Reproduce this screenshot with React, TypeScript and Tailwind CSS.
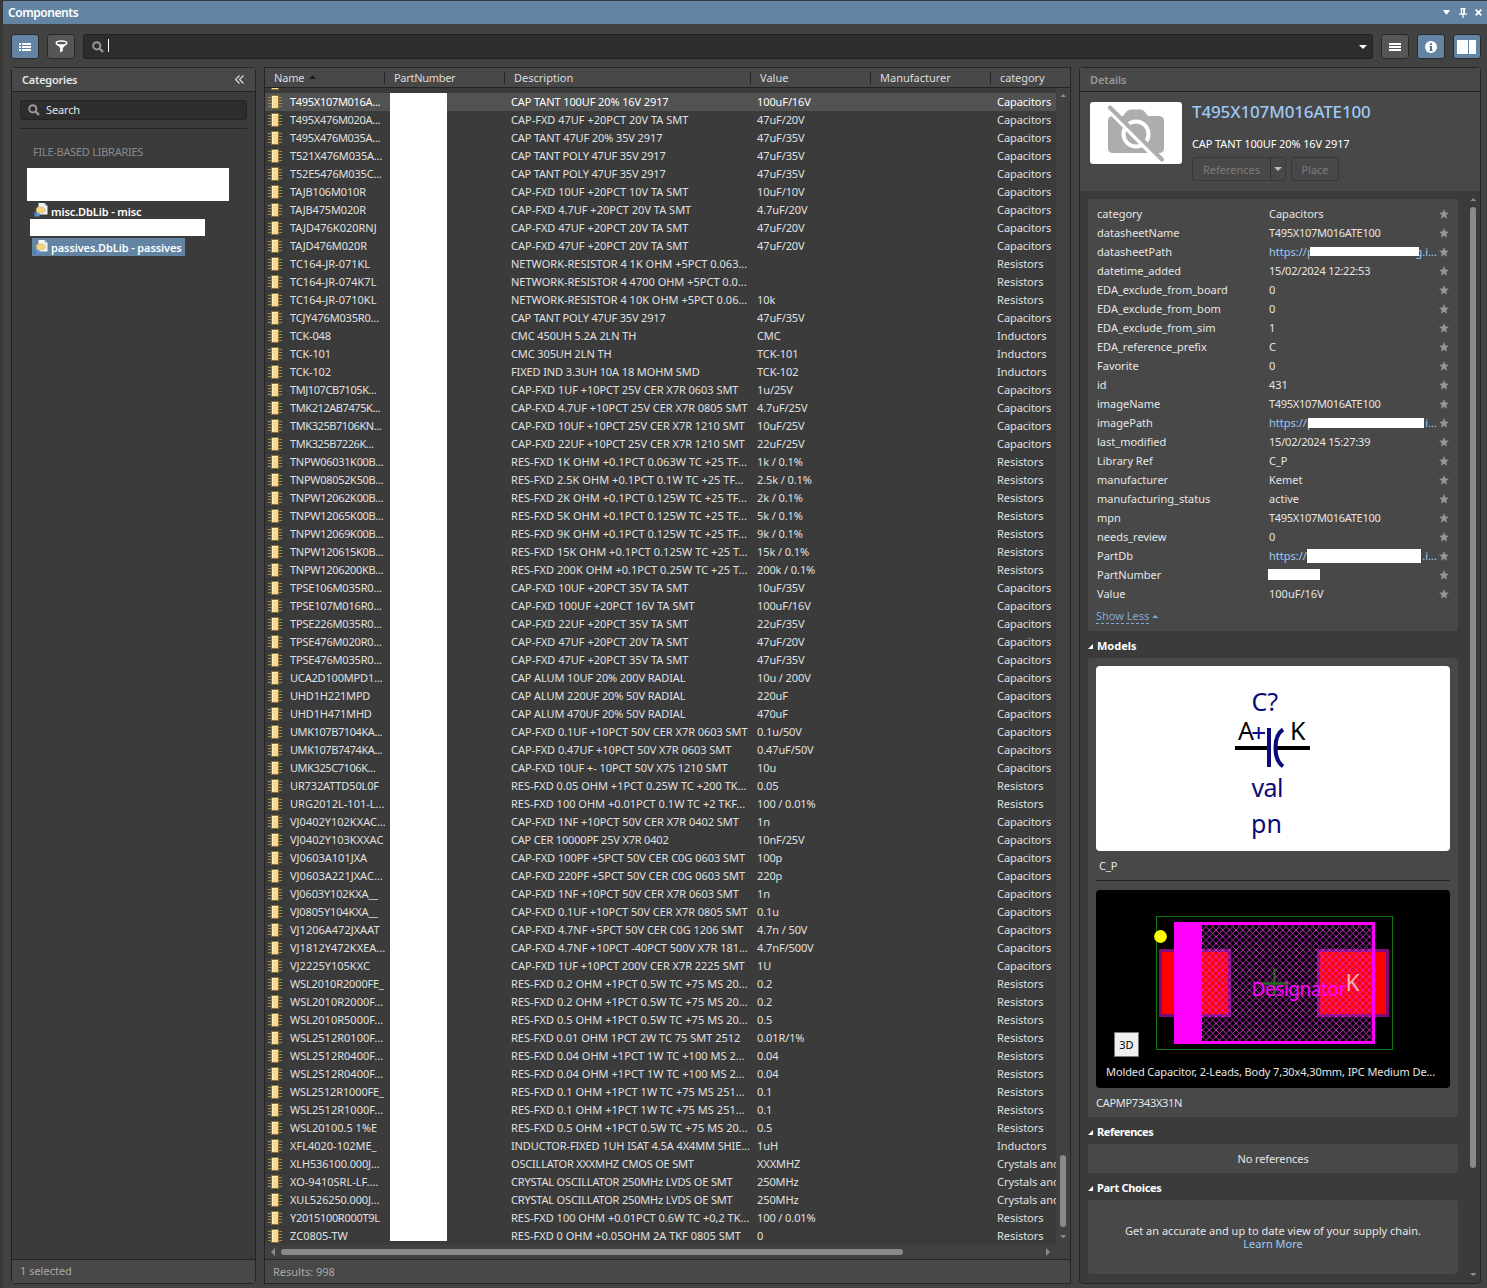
import React from "react";

const RAW = `T495X107M016A...|CAP TANT 100UF 20% 16V 2917|100uF/16V|C
T495X476M020A...|CAP-FXD 47UF +20PCT 20V TA SMT|47uF/20V|C
T495X476M035A...|CAP TANT 47UF 20% 35V 2917|47uF/35V|C
T521X476M035A...|CAP TANT POLY 47UF 35V 2917|47uF/35V|C
T52E5476M035C...|CAP TANT POLY 47UF 35V 2917|47uF/35V|C
TAJB106M010R|CAP-FXD 10UF +20PCT 10V TA SMT|10uF/10V|C
TAJB475M020R|CAP-FXD 4.7UF +20PCT 20V TA SMT|4.7uF/20V|C
TAJD476K020RNJ|CAP-FXD 47UF +20PCT 20V TA SMT|47uF/20V|C
TAJD476M020R|CAP-FXD 47UF +20PCT 20V TA SMT|47uF/20V|C
TC164-JR-071KL|NETWORK-RESISTOR 4 1K OHM +5PCT 0.063...||R
TC164-JR-074K7L|NETWORK-RESISTOR 4 4700 OHM +5PCT 0.0...||R
TC164-JR-0710KL|NETWORK-RESISTOR 4 10K OHM +5PCT 0.06...|10k|R
TCJY476M035R0...|CAP TANT POLY 47UF 35V 2917|47uF/35V|C
TCK-048|CMC 450UH 5.2A 2LN TH|CMC|I
TCK-101|CMC 305UH 2LN TH|TCK-101|I
TCK-102|FIXED IND 3.3UH 10A 18 MOHM SMD|TCK-102|I
TMJ107CB7105K...|CAP-FXD 1UF +10PCT 25V CER X7R 0603 SMT|1u/25V|C
TMK212AB7475K...|CAP-FXD 4.7UF +10PCT 25V CER X7R 0805 SMT|4.7uF/25V|C
TMK325B7106KN...|CAP-FXD 10UF +10PCT 25V CER X7R 1210 SMT|10uF/25V|C
TMK325B7226K...|CAP-FXD 22UF +10PCT 25V CER X7R 1210 SMT|22uF/25V|C
TNPW06031K00B...|RES-FXD 1K OHM +0.1PCT 0.063W TC +25 TF...|1k / 0.1%|R
TNPW08052K50B...|RES-FXD 2.5K OHM +0.1PCT 0.1W TC +25 TF...|2.5k / 0.1%|R
TNPW12062K00B...|RES-FXD 2K OHM +0.1PCT 0.125W TC +25 TF...|2k / 0.1%|R
TNPW12065K00B...|RES-FXD 5K OHM +0.1PCT 0.125W TC +25 TF...|5k / 0.1%|R
TNPW12069K00B...|RES-FXD 9K OHM +0.1PCT 0.125W TC +25 TF...|9k / 0.1%|R
TNPW120615K0B...|RES-FXD 15K OHM +0.1PCT 0.125W TC +25 T...|15k / 0.1%|R
TNPW1206200KB...|RES-FXD 200K OHM +0.1PCT 0.25W TC +25 T...|200k / 0.1%|R
TPSE106M035R0...|CAP-FXD 10UF +20PCT 35V TA SMT|10uF/35V|C
TPSE107M016R0...|CAP-FXD 100UF +20PCT 16V TA SMT|100uF/16V|C
TPSE226M035R0...|CAP-FXD 22UF +20PCT 35V TA SMT|22uF/35V|C
TPSE476M020R0...|CAP-FXD 47UF +20PCT 20V TA SMT|47uF/20V|C
TPSE476M035R0...|CAP-FXD 47UF +20PCT 35V TA SMT|47uF/35V|C
UCA2D100MPD1...|CAP ALUM 10UF 20% 200V RADIAL|10u / 200V|C
UHD1H221MPD|CAP ALUM 220UF 20% 50V RADIAL|220uF|C
UHD1H471MHD|CAP ALUM 470UF 20% 50V RADIAL|470uF|C
UMK107B7104KA...|CAP-FXD 0.1UF +10PCT 50V CER X7R 0603 SMT|0.1u/50V|C
UMK107B7474KA...|CAP-FXD 0.47UF +10PCT 50V X7R 0603 SMT|0.47uF/50V|C
UMK325C7106K...|CAP-FXD 10UF +- 10PCT 50V X7S 1210 SMT|10u|C
UR732ATTD50L0F|RES-FXD 0.05 OHM +1PCT 0.25W TC +200 TK...|0.05|R
URG2012L-101-L...|RES-FXD 100 OHM +0.01PCT 0.1W TC +2 TKF...|100 / 0.01%|R
VJ0402Y102KXAC...|CAP-FXD 1NF +10PCT 50V CER X7R 0402 SMT|1n|C
VJ0402Y103KXXAC|CAP CER 10000PF 25V X7R 0402|10nF/25V|C
VJ0603A101JXA|CAP-FXD 100PF +5PCT 50V CER C0G 0603 SMT|100p|C
VJ0603A221JXAC...|CAP-FXD 220PF +5PCT 50V CER C0G 0603 SMT|220p|C
VJ0603Y102KXA__|CAP-FXD 1NF +10PCT 50V CER X7R 0603 SMT|1n|C
VJ0805Y104KXA__|CAP-FXD 0.1UF +10PCT 50V CER X7R 0805 SMT|0.1u|C
VJ1206A472JXAAT|CAP-FXD 4.7NF +5PCT 50V CER C0G 1206 SMT|4.7n / 50V|C
VJ1812Y472KXEA...|CAP-FXD 4.7NF +10PCT -40PCT 500V X7R 181...|4.7nF/500V|C
VJ2225Y105KXC|CAP-FXD 1UF +10PCT 200V CER X7R 2225 SMT|1U|C
WSL2010R2000FE_|RES-FXD 0.2 OHM +1PCT 0.5W TC +75 MS 20...|0.2|R
WSL2010R2000F...|RES-FXD 0.2 OHM +1PCT 0.5W TC +75 MS 20...|0.2|R
WSL2010R5000F...|RES-FXD 0.5 OHM +1PCT 0.5W TC +75 MS 20...|0.5|R
WSL2512R0100F...|RES-FXD 0.01 OHM 1PCT 2W TC 75 SMT 2512|0.01R/1%|R
WSL2512R0400F...|RES-FXD 0.04 OHM +1PCT 1W TC +100 MS 2...|0.04|R
WSL2512R0400F...|RES-FXD 0.04 OHM +1PCT 1W TC +100 MS 2...|0.04|R
WSL2512R1000FE_|RES-FXD 0.1 OHM +1PCT 1W TC +75 MS 251...|0.1|R
WSL2512R1000F...|RES-FXD 0.1 OHM +1PCT 1W TC +75 MS 251...|0.1|R
WSL20100.5 1%E|RES-FXD 0.5 OHM +1PCT 0.5W TC +75 MS 20...|0.5|R
XFL4020-102ME_|INDUCTOR-FIXED 1UH ISAT 4.5A 4X4MM SHIE...|1uH|I
XLH536100.000J...|OSCILLATOR XXXMHZ CMOS OE SMT|XXXMHZ|X
XO-9410SRL-LF....|CRYSTAL OSCILLATOR 250MHz LVDS OE SMT|250MHz|X
XUL526250.000J...|CRYSTAL OSCILLATOR 250MHz LVDS OE SMT|250MHz|X
Y2015100R000T9L|RES-FXD 100 OHM +0.01PCT 0.6W TC +0,2 TK...|100 / 0.01%|R
ZC0805-TW|RES-FXD 0 OHM +0.05OHM 2A TKF 0805 SMT|0|R`;

const CATEGORY: Record<string, string> = {
  C: "Capacitors",
  R: "Resistors",
  I: "Inductors",
  X: "Crystals and",
};

const ROWS = RAW.split("\n").map((line) => {
  const [name, description, value, code] = line.split("|");
  return { name, description, value, category: CATEGORY[code] };
});

// Letter spacing that keeps long part names inside their column.
function nameTracking(name: string) {
  if (/^(TMK|TMJ|UMK)/.test(name)) return "tracking-[-0.42px]";
  if (/^(T495|Y2|TNPW)/.test(name)) return "tracking-[-0.3px]";
  if (/^(T5|TPSE|TCJY|UCA|UHD|TCK)/.test(name)) return "tracking-[-0.18px]";
  if (/^(TAJD476M|TAJB|WSL.*_|UR7|XLH|XUL|VJ.*__)/.test(name)) return "tracking-[-0.14px]";
  return "";
}

function descriptionTracking(text: string) {
  if (/POLY|CRYSTAL|OSCILLATOR|CAP CER/.test(text)) return "tracking-[-0.18px]";
  if (/TANT|ALUM|FIXED|CMC/.test(text)) return "tracking-[-0.11px]";
  if (/^CAP-FXD.*(X7|C0G)/.test(text)) return "tracking-[-0.04px]";
  if (/^RES-FXD.*(TF|T|20|251|2)\.\.\.$/.test(text)) return "tracking-[0.04px]";
  return "";
}

type Property = { name: string; value: string; link?: boolean; tight?: string; mask?: string; tail?: string };

const PROPERTIES: Property[] = [
  { name: "category", value: "Capacitors" },
  { name: "datasheetName", value: "T495X107M016ATE100", tight: "tracking-[-0.28px]" },
  { name: "datasheetPath", value: "https://p", link: true, mask: "left-[41px] w-[109px] top-[5px] h-[9px]", tail: "g.i..." },
  { name: "datetime_added", value: "15/02/2024 12:22:53", tight: "tracking-[-0.2px]" },
  { name: "EDA_exclude_from_board", value: "0" },
  { name: "EDA_exclude_from_bom", value: "0" },
  { name: "EDA_exclude_from_sim", value: "1" },
  { name: "EDA_reference_prefix", value: "C" },
  { name: "Favorite", value: "0" },
  { name: "id", value: "431" },
  { name: "imageName", value: "T495X107M016ATE100", tight: "tracking-[-0.28px]" },
  { name: "imagePath", value: "https://p", link: true, mask: "left-[39px] w-[116px] top-[5px] h-[10px]", tail: "i..." },
  { name: "last_modified", value: "15/02/2024 15:27:39", tight: "tracking-[-0.2px]" },
  { name: "Library Ref", value: "C_P" },
  { name: "manufacturer", value: "Kemet" },
  { name: "manufacturing_status", value: "active" },
  { name: "mpn", value: "T495X107M016ATE100", tight: "tracking-[-0.28px]" },
  { name: "needs_review", value: "0" },
  { name: "PartDb", value: "https://", link: true, mask: "left-[38px] w-[114px] top-[3px] h-[14px]", tail: ".i..." },
  { name: "PartNumber", value: "", mask: "left-[-1px] w-[52px] top-[4px] h-[11px]" },
  { name: "Value", value: "100uF/16V" },
];

function ChipIcon() {
  return (
    <svg className="block shrink-0" width="14" height="14" viewBox="0 0 14 14" shapeRendering="crispEdges">
      <path d="M0 2.5h3M0 5.500h3M0 8.500h3M0 11.500h3M11 2.500h3M11 5.500h3M11 8.500h3M11 11.500h3" stroke="#a08a4a" />
      <rect x="3" y="0" width="8" height="14" fill="#8a713a" />
      <rect x="4" y="1" width="6" height="12" fill="#fad98c" />
      <rect x="4" y="1" width="1" height="12" fill="#fdf0c8" />
      <rect x="4" y="1" width="6" height="1" fill="#fdf0c8" />
    </svg>
  );
}

function LibraryIcon() {
  return (
    <svg className="block shrink-0" width="14" height="14" viewBox="0 0 14 14">
      <path d="M4.500 0h6L13.500 3v8.500h-9z" fill="#f3f5f7" />
      <path d="M10.500 0l3 3h-3z" fill="#b3c4d3" />
      <path d="M0 9.500h5.500v4H0z" fill="#5b93d0" />
      <path d="M0 10.500h2v3H0z" fill="#3d77ba" />
      <path d="M2.500 5L4 4h5l1 1.500h1.200v3H10L9 10H3.800L2.200 8.500z" fill="#f4d283" stroke="#caa862" strokeWidth=".5" />
    </svg>
  );
}

function SearchIcon() {
  return (
    <svg className="block shrink-0" width="12" height="12" viewBox="0 0 12 12" fill="none" stroke="#999">
      <circle cx="4.800" cy="4.800" r="3.600" strokeWidth="2" />
      <path d="M7.500 7.500L11 11" strokeWidth="2.400" />
    </svg>
  );
}

function Star() {
  return (
    <svg className="block" width="10" height="10" viewBox="0 0 10 10">
      <path d="M5 0l1.400 3.500L10 3.800 7.200 6.100 8.100 9.800 5 7.800 1.900 9.800 2.800 6.100 0 3.800l3.600-.3z" fill="#969696" />
    </svg>
  );
}

function Triangle({ dir, className = "", size = "md" }: { dir: "up" | "down" | "left" | "right"; className?: string; size?: "sm" | "md" }) {
  const d = { up: "M0 4L4 0l4 4z", down: "M0 0h8L4 4z", left: "M4 0v8L0 4z", right: "M0 0l4 4-4 4z" }[dir];
  const vertical = dir === "up" || dir === "down";
  const k = size === "sm" ? 0.8 : 1;
  return (
    <svg className={"block shrink-0 " + className} width={(vertical ? 8 : 4) * k} height={(vertical ? 4 : 8) * k} viewBox={vertical ? "0 0 8 4" : "0 0 4 8"}>
      <path d={d} fill="currentColor" />
    </svg>
  );
}

function SectionTitle({ children, className }: { children: React.ReactNode; className: string }) {
  return (
    <div className={"flex items-center font-bold text-white " + className}>
      <svg className="mr-1 block" width="5" height="5" viewBox="0 0 5 5">
        <path d="M5 0v5H0z" fill="#fff" />
      </svg>
      {children}
    </div>
  );
}

function Header() {
  const cell = "flex h-3 shrink-0 items-center border-r border-[#242424] pl-[9px]";
  return (
    <div className="flex h-5 shrink-0 items-center overflow-hidden border-b border-[#242424] bg-[#484848] text-[#dcdcdc]">
      <div className={cell + " w-[120px]"}>
        <span className="tracking-[-0.2px]">Name</span>
        <svg className="mb-[2px] ml-[5px] block" width="7" height="4" viewBox="0 0 7 4">
          <path d="M0 4L3.500 0 7 4z" fill="#1e1e1e" />
        </svg>
      </div>
      <div className={cell + " w-[120px] tracking-[-0.3px]"}>PartNumber</div>
      <div className={cell + " w-[246px]"}>Description</div>
      <div className={cell + " w-[120px]"}>Value</div>
      <div className={cell + " w-[120px]"}>Manufacturer</div>
      <div className="pl-[9px] tracking-[-0.1px]">category</div>
    </div>
  );
}

function Row({ row, selected }: { row: (typeof ROWS)[number]; selected?: boolean }) {
  return (
    <div className={"flex h-[18px] shrink-0 items-center whitespace-nowrap " + (selected ? "bg-[#525252] text-white" : "text-[#e0e0e0]")}>
      <div className="flex w-[246px] shrink-0 items-center pl-[3px]">
        <ChipIcon />
        <span className={"ml-2 " + nameTracking(row.name)}>{row.name}</span>
      </div>
      <span className={"w-[246px] shrink-0 " + descriptionTracking(row.description)}>{row.description}</span>
      <span className="w-[240px] shrink-0 tracking-[-0.1px]">{row.value}</span>
      <span className="w-[59px] shrink-0 overflow-hidden tracking-[-0.05px]">{row.category}</span>
    </div>
  );
}

function SymbolPreview() {
  return (
    <svg className="block rounded bg-white" width="354" height="185" viewBox="0 0 354 185">
      <g fontSize="25" fill="#0a0a78">
        <text x="155.500" y="45">C?</text>
        <text x="155.500" y="131" textLength="32">val</text>
        <text x="155" y="167">pn</text>
      </g>
      <g fontSize="25" fill="#000">
        <text x="142" y="74">A</text>
        <text x="194" y="74">K</text>
      </g>
      <path d="M139 82h34M180 82h34" stroke="#000" strokeWidth="4" />
      <path d="M156.500 67h12.500M162.700 61v12" stroke="#0a0a88" strokeWidth="2" />
      <path d="M173 62v39" stroke="#0a0a78" strokeWidth="4" />
      <path d="M187 63.500C177 70 177 93 187 100.500" fill="none" stroke="#0a0a78" strokeWidth="4" />
    </svg>
  );
}

function FootprintPreview() {
  return (
    <svg className="block rounded bg-black" width="354" height="198" viewBox="0 0 354 198">
      <defs>
        <pattern id="hatch" width="6.670" height="6.670" patternUnits="userSpaceOnUse">
          <path d="M-1-1L7.670 7.670M-1 7.670L7.670-1" stroke="#dc30dc" strokeWidth=".9" />
        </pattern>
      </defs>
      <g fill="#f00" stroke="#7d0a78" strokeWidth="3">
        <rect x="64.500" y="60.500" width="69" height="65" />
        <rect x="222.500" y="60.500" width="69" height="65" />
      </g>
      <rect x="60.500" y="26.500" width="236" height="133" fill="none" stroke="#117a11" />
      <circle cx="64.500" cy="46.500" r="6.400" fill="#ff0" />
      <rect x="106" y="34" width="172" height="118" fill="url(#hatch)" />
      <rect x="79.500" y="33.500" width="198" height="119" fill="none" stroke="#f0f" strokeWidth="3" />
      <rect x="79" y="33" width="27" height="120" fill="#f0f" />
      <path d="M178.500 78v28M165 93.500h27" stroke="#1c6a1c" strokeWidth="2.500" />
      <text x="155.500" y="106" fontSize="19" fill="#f0f" textLength="95">Designator</text>
      <text x="249.500" y="101" fontSize="23" fill="#f5b0b8">K</text>
    </svg>
  );
}

export default function App() {
  return (
    <div className="flex h-[1288px] w-[1487px] flex-col overflow-hidden border-l-[3px] border-[#383838] bg-[#424242] font-['Noto_Sans',sans-serif] text-[11px] leading-[14px] text-[#e6e6e6]">
      <header className="flex h-6 shrink-0 items-center border-t border-[#303a44] bg-[#6384a3] pr-[5px] pl-[5px] text-white">
        <span className="grow text-[12px] font-semibold tracking-[-0.45px]">Components</span>
        <svg className="block" width="7" height="5" viewBox="0 0 7 5">
          <path d="M0 0h7L3.500 5z" fill="#fff" />
        </svg>
        <svg className="ml-[9px] block" width="8" height="10" viewBox="0 0 8 10">
          <path d="M1.500.7h5M2.500 1v5M5 1v5M0 6.200h8M4 6v4" stroke="#fff" strokeWidth="1.300" />
          <path d="M4.500 1h1.500v5H4.500z" fill="#fff" />
        </svg>
        <svg className="ml-2 block" width="7" height="7" viewBox="0 0 7 7">
          <path d="M.7.7l5.600 5.600M6.300.7L.7 6.300" stroke="#fff" strokeWidth="1.800" />
        </svg>
      </header>

      <div className="flex h-[43px] shrink-0 items-center pt-[2px] pr-[6px] pl-2">
        <div className="flex h-[25px] w-7 items-center justify-center rounded-[3px] border border-[#2a2a2a] bg-[#6384a3]">
          <svg width="12" height="8" viewBox="0 0 12 8" shapeRendering="crispEdges">
            <path d="M0 1h2M3 1h9M0 4h2M3 4h9M0 7h2M3 7h9" stroke="#fff" strokeWidth="2" />
          </svg>
        </div>
        <div className="ml-2 flex h-[25px] w-7 items-center justify-center rounded-[3px] border border-[#2a2a2a] bg-[#565656]">
          <svg width="13" height="13" viewBox="0 0 13 13">
            <path d="M1 3.500L5.200 8v4.500l2.600-1.600V8L12 3.500z" fill="#fff" />
            <ellipse cx="6.500" cy="3" rx="5.200" ry="2.100" fill="#565656" stroke="#fff" strokeWidth="1.500" />
          </svg>
        </div>
        <div className="ml-2 flex h-[25px] grow items-center rounded-[3px] border border-[#222] bg-[#2d2d2d] pr-[5px] pl-2">
          <SearchIcon />
          <div className="mb-[2px] ml-1 h-[13px] w-px bg-white" />
          <div className="grow" />
          <Triangle dir="down" className="text-white" />
        </div>
        <div className="ml-2 flex h-[25px] w-7 items-center justify-center rounded-[3px] border border-[#2a2a2a] bg-[#565656]">
          <svg width="12" height="8" viewBox="0 0 12 8" shapeRendering="crispEdges">
            <path d="M0 1h12M0 4h12M0 7h12" stroke="#fff" strokeWidth="2" />
          </svg>
        </div>
        <div className="ml-2 flex h-[25px] w-7 items-center justify-center rounded-[3px] border border-[#2a2a2a] bg-[#6384a3]">
          <svg width="12" height="12" viewBox="0 0 12 12">
            <circle cx="6" cy="6" r="6" fill="#fff" />
            <path d="M5 2.200h2v1.700H5zM4.500 5H7v4h.7v1H4.400V9H5V6h-.5z" fill="#4f7191" />
          </svg>
        </div>
        <div className="ml-2 flex h-[25px] w-7 items-center justify-center gap-px rounded-[3px] border border-[#2a2a2a] bg-[#6384a3] pr-px">
          <div className="h-[14px] w-[11px] bg-white" />
          <div className="h-[14px] w-[7px] bg-white" />
        </div>
      </div>

      <main className="flex h-[1217px] gap-2 pr-[6px] pl-2">
        <aside className="flex w-[245px] shrink-0 flex-col rounded-sm border border-[#242424] bg-[#3b3b3b]">
          <div className="flex h-6 shrink-0 items-center justify-between border-b border-[#242424] bg-[#484848] pr-[11px] pl-[10px] font-semibold tracking-[-0.25px]">
            Categories
            <svg width="9" height="9" viewBox="0 0 9 9" fill="none" stroke="#ddd" strokeWidth="1.200">
              <path d="M4.500.5l-4 4 4 4M8.500.5l-4 4 4 4" />
            </svg>
          </div>
          <div className="mx-2 mt-2 flex h-5 items-center rounded-[3px] border border-[#242424] bg-[#2d2d2d] pl-[7px]">
            <SearchIcon />
            <span className="ml-1.5 tracking-[-0.15px]">Search</span>
          </div>
          <div className="mx-2 mt-2 h-px shrink-0 bg-[#242424]" />
          <div className="mt-4 ml-[21px] h-[15px] tracking-[-0.26px] text-[#8a8a8a]">FILE-BASED LIBRARIES</div>
          <div className="mt-2 ml-[15px] h-[33px] w-[202px] bg-white" />
          <div className="ml-5 flex h-[18px] items-center pl-[2px] font-semibold whitespace-nowrap text-white">
            <LibraryIcon />
            <span className="ml-[3px] pt-[3px] tracking-[-0.12px]">misc.DbLib - misc</span>
          </div>
          <div className="ml-[18px] h-[17px] w-[175px] bg-white" />
          <div className="mt-[2px] ml-5 flex h-[18px] w-[153px] items-center bg-[#6384a3] pl-[2px] font-semibold whitespace-nowrap text-white">
            <LibraryIcon />
            <span className="ml-[3px] pt-px tracking-[-0.12px]">passives.DbLib - passives</span>
          </div>
          <div className="grow" />
          <div className="flex h-6 items-center border-t border-[#242424] bg-[#484848] pb-[2px] pl-2 text-[#a8a8a8]">1 selected</div>
        </aside>

        <section className="flex w-[807px] shrink-0 flex-col border border-[#242424] bg-[#3b3b3b]">
          <Header />
          <div className="flex h-[1157px] shrink-0">
            <div className="relative flex w-[791px] flex-col overflow-hidden">
              <div className="flex h-[5px] shrink-0 items-end overflow-hidden pb-[3px] pl-[3px]">
                <ChipIcon />
              </div>
              {ROWS.map((row, i) => (
                <Row key={i} row={row} selected={i === 0} />
              ))}
              <div className="absolute top-[5px] left-[125px] h-[1148px] w-[57px] bg-white" />
            </div>
            <div className="flex w-[14px] flex-col items-center bg-[#414141] pt-[6px] pb-[7px] text-[#8a8a8a]">
              <Triangle dir="up" size="sm" />
              <div className="grow" />
              <div className="mb-[8px] h-[72px] w-[6px] rounded-full bg-[#8a8a8a]" />
              <Triangle dir="down" size="sm" />
            </div>
          </div>
          <div className="flex h-[14px] shrink-0 items-center bg-[#414141] pl-[6px] text-[#8a8a8a]">
            <Triangle dir="left" />
            <div className="ml-[6px] h-[6px] w-[622px] rounded-full bg-[#8a8a8a]" />
            <div className="grow" />
            <Triangle dir="right" className="mr-[20px]" />
          </div>
          <div className="flex grow items-center border-t border-[#242424] bg-[#484848] pl-2 text-[#a8a8a8]">Results: 998</div>
        </section>

        <section className="flex w-[402px] shrink-0 flex-col rounded-sm border border-[#242424] bg-[#3b3b3b]">
          <div className="flex h-6 shrink-0 items-center border-b border-[#242424] bg-[#484848] pl-[10px] font-semibold tracking-[-0.1px] text-[#999]">Details</div>
          <div className="flex h-[99px] shrink-0 bg-[#484848] pt-[10px] pl-[10px]">
            <div className="flex h-[62px] w-[92px] shrink-0 justify-center rounded-[3px] bg-white pt-[2px]">
              <svg width="58" height="58" viewBox="0 0 58 58">
                <path d="M6 12h10l4-5q1.500-1.500 3.500-1.500h10q2 0 3.500 1.500l4 5h10q6 0 6 5v27q0 5-5 5H6q-5 0-5-5V17q0-5 5-5z" fill="#adadad" />
                <circle cx="29" cy="30" r="12.500" fill="none" stroke="#fff" strokeWidth="4" />
                <path d="M2 6l52 53" stroke="#fff" strokeWidth="5" />
                <path d="M3 3.500l52 52" stroke="#adadad" strokeWidth="4" strokeLinecap="round" />
              </svg>
            </div>
            <div className="ml-[10px]">
              <div className="text-[17px] leading-5 font-medium tracking-[-0.14px] text-[#9cc8f5]">T495X107M016ATE100</div>
              <div className="mt-[15px] tracking-[-0.11px] text-white">CAP TANT 100UF 20% 16V 2917</div>
              <div className="mt-[6px] flex gap-[5px] text-[#7c7c7c]">
                <div className="flex h-6 w-[94px] rounded-[3px] border border-[#393939]">
                  <span className="flex grow items-center justify-center pt-[2px]">References</span>
                  <span className="flex w-[15px] items-center justify-center border-l border-[#303030] text-[#bbb]">
                    <Triangle dir="down" />
                  </span>
                </div>
                <div className="flex h-6 w-[48px] items-center justify-center rounded-[3px] border border-[#363636] pt-[2px]">Place</div>
              </div>
            </div>
          </div>

          <div className="flex grow">
            <div className="ml-2 w-[370px] shrink-0 pt-2">
              <div className="h-[432px] rounded-[3px] bg-[#484848] pt-[5px] pr-[9px] pl-[9px]">
                {PROPERTIES.map((p) => (
                  <div key={p.name} className="flex h-[19px] items-center">
                    <span className="w-[172px] shrink-0">{p.name}</span>
                    <div className={"relative flex h-[19px] grow items-center " + (p.link ? "text-[#9cc8f5]" : "")}>
                      <span className={p.tight ?? ""}>{p.value}</span>
                      {p.mask && <div className={"absolute bg-white " + p.mask} />}
                      {p.tail && <span className="ml-auto pr-[2px]">{p.tail}</span>}
                    </div>
                    <Star />
                  </div>
                ))}
                <div className="mt-[6px] -ml-px flex items-center text-[#7fa9d2]">
                  <span className="border-b border-dashed border-[#7fa9d2] leading-[14px]">Show Less</span>
                  <Triangle dir="up" size="sm" className="ml-[3px]" />
                </div>
              </div>
              <SectionTitle className="h-[27px] pt-[3px]">Models</SectionTitle>
              <div className="h-[459px] rounded-[3px] bg-[#484848] px-2 pt-2">
                <SymbolPreview />
                <div className="mt-2 pl-[3px] leading-[14px]">C_P</div>
                <div className="mt-[7px] mb-[9px] h-px bg-[#242424]" />
                <div className="relative">
                  <FootprintPreview />
                  <div className="absolute top-[142px] left-[18px] flex size-[25px] items-center justify-center border border-[#777] bg-[#efefef] text-black">3D</div>
                  <div className="absolute top-[175px] left-[10px] tracking-[-0.1px] whitespace-nowrap">Molded Capacitor, 2-Leads, Body 7,30x4,30mm, IPC Medium De...</div>
                </div>
                <div className="mt-2 tracking-[-0.28px]">CAPMP7343X31N</div>
              </div>
              <SectionTitle className="h-[27px] pt-[3px] tracking-[-0.45px]">References</SectionTitle>
              <div className="flex h-[29px] items-center justify-center rounded-[3px] bg-[#484848] tracking-[-0.1px]">No references</div>
              <SectionTitle className="h-[27px] pt-[3px] tracking-[-0.3px]">Part Choices</SectionTitle>
              <div className="flex h-[74px] flex-col items-center justify-center rounded-[3px] bg-[#484848] leading-[13px]">
                <span>Get an accurate and up to date view of your supply chain.</span>
                <span className="text-[#9cc8f5]">Learn More</span>
              </div>
            </div>
            <div className="ml-[8px] flex w-[14px] flex-col items-center pt-[7px] pb-[7px] text-[#8a8a8a]">
              <Triangle dir="up" size="sm" />
              <div className="mt-[6px] h-[961px] w-[6px] rounded-full bg-[#8a8a8a]" />
              <div className="grow" />
              <Triangle dir="down" size="sm" />
            </div>
          </div>
        </section>
      </main>
    </div>
  );
}
